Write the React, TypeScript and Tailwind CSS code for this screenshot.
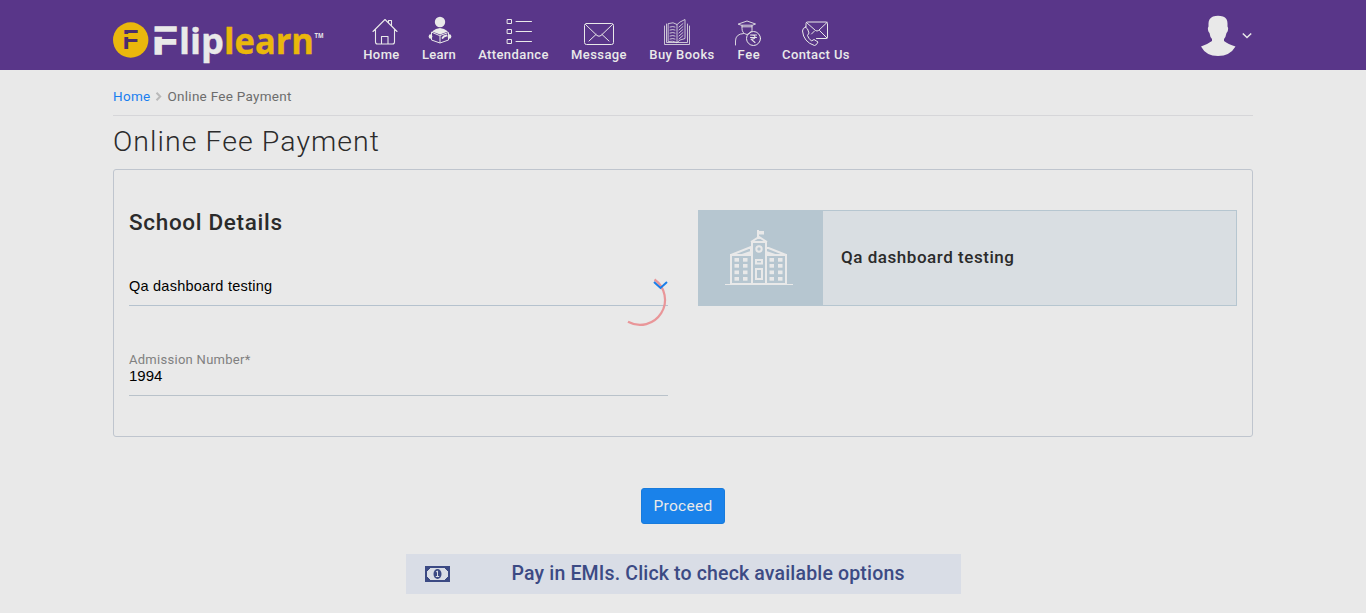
import React from "react";

type IconProps = { children: React.ReactNode; w: number; h: number; className?: string };
const Icon = ({ children, w, h, className = "" }: IconProps) => (
  <svg width={w} height={h} viewBox={`0 0 ${w} ${h}`} fill="none" stroke="#e9e9e9" strokeWidth="1" strokeLinejoin="round" strokeLinecap="round" className={`block shrink-0 ${className}`}>
    {children}
  </svg>
);

const HomeIcon = () => (
  <Icon w={26} h={30} className="ml-[6px]">
    <path d="M1 15.500 13 3.500l12 12M3.500 13.500v12.500q0 2 2 2h15q2 0 2-2V13.500M9.500 28v-7.500h6.500V28M16.500 6.500V4.500h3v5" strokeWidth="1.100" />
  </Icon>
);
const LearnIcon = () => (
  <Icon w={24} h={30} className="ml-[2px]">
    <circle cx="12" cy="6" r="5.200" fill="#e9e9e9" stroke="none" />
    <path d="M4 15.500q4-3.500 8-3.500t8 3.500l-8 3z" fill="#e9e9e9" stroke="none" />
    <path d="M3.500 16.500v7.500l8.500 3 8.500-3v-7.500L12 19.500zM12 19.500v7" strokeWidth="1" />
    <path d="M14.500 22q1-2 4-2.500" strokeWidth="1.800" />
    <ellipse cx="2.500" cy="20.500" rx="1.800" ry="2.200" fill="#e9e9e9" stroke="none" />
    <ellipse cx="21.500" cy="20.500" rx="1.800" ry="2.200" fill="#e9e9e9" stroke="none" />
  </Icon>
);
const ListIcon = () => (
  <Icon w={26} h={30} className="ml-[11px]">
    <path d="M1.500 3.500h4v4h-4zM1.500 13.500h4v4h-4zM1.500 23.500h4v4h-4zM10 5.500h15.500M10 15.500h15.500M10 25.500h15.500" />
  </Icon>
);
const MailIcon = () => (
  <Icon w={30} h={30}>
    <rect x=".5" y="7.500" width="29" height="21" rx="2" />
    <path d="m1.500 8.500 11.500 11q2 1.500 4 0l11.500-11M5 25l7-6.500M25 25l-7-6.500" />
  </Icon>
);
const BooksIcon = () => (
  <Icon w={26} h={30} className="-ml-[10px]">
    <path d="M.5 10v18.500h25V10M2.500 8v18.500h21V8M4.500 7.500q5-2 8.500 1v18q-4-2-8.500-1zM13 8.500Q15 6 21 3.500v19q-6 1-8 4" strokeWidth=".8" />
    <path d="M6 11q3-1 5 0M6 14q3-1 5 0M6 17q3-1 5 0M6 20q3-1 5 0M6 23q3-1 5 0M15 11l4-3.500M15 14l4-3.500M15 17l4-3.500M15 20l4-3.500M15 23l4-3.500" strokeWidth=".8" />
  </Icon>
);
const FeeIcon = () => (
  <Icon w={26} h={30} className="-ml-[2px]">
    <path d="M3.500 8 12 5l8.500 3-3 1.200h-11zM7 9.500v3q0 5 5 6 3-.5 5-4v-5M7 10.800h10M.5 29v-4q0-7 8-7.500" strokeWidth=".9" />
    <circle cx="18.500" cy="22.500" r="7" />
    <path d="M15.500 19h6M15.500 21.500h6M15.500 19q4.500 0 4.500 2t-4 2.200l4 3.300" strokeWidth="1.100" />
  </Icon>
);
const ContactIcon = () => (
  <Icon w={26} h={30} className="-ml-[2px]">
    <path d="M4 11V7.500q0-1.500 1.500-1.500h18.500q1.500 0 1.500 1.500v13.500q0 1.500-1.500 1.500H14.500M4.500 6.500l9 8q1.500 1 3 0l8.500-8M25 22l-7.500-7.500M9.500 18l3-3" />
    <path d="M3.500 11q-3 1-3 4 1 11 12 14.500 2 0 3.500-3.500l-4-2.500-2.500 1.500q-3-2.500-4-5.500l1.500-2.500Q6 12 3.500 11z" />
  </Icon>
);

const items = [
  { label: "Home", icon: <HomeIcon />, cls: "w-[37px] tracking-[0.4px]" },
  { label: "Learn", icon: <LearnIcon />, cls: "w-[34px] tracking-[0.2px]" },
  { label: "Attendance", icon: <ListIcon />, cls: "w-[71px] tracking-[0.4px]" },
  { label: "Message", icon: <MailIcon />, cls: "w-[56px] tracking-[0.4px]" },
  { label: "Buy Books", icon: <BooksIcon />, cls: "w-[66px] tracking-[0.45px]" },
  { label: "Fee", icon: <FeeIcon />, cls: "w-[24px] tracking-[0.7px]" },
  { label: "Contact Us", icon: <ContactIcon />, cls: "w-[66px] tracking-[0.38px]" },
];

const Logo = () => (
  <svg width="212" height="50" viewBox="0 0 212 50" className="mt-[16px] block shrink-0 overflow-visible" aria-label="Fliplearn">
    <circle cx="17.700" cy="24" r="17.700" fill="#eab70c" />
    <text x="9.500" y="33" fontFamily="Liberation Sans" fontWeight="700" fontSize="27" textLength="16" lengthAdjust="spacingAndGlyphs" fill="#4b2c6d">F</text>
    <rect x="10" y="18" width="17" height="3" fill="#eab70c" />
    <text x="39.500" y="37.500" fontFamily="Liberation Sans" fontWeight="700" fontSize="39" textLength="25" lengthAdjust="spacingAndGlyphs" fill="#e9e9e9" stroke="#e9e9e9" strokeWidth="1.300">F</text>
    <rect x="39" y="15.800" width="27" height="5" fill="#593689" />
    <text x="66" y="37.500" fontFamily="Open Sans" fontWeight="700" fontSize="35.500" textLength="45" lengthAdjust="spacingAndGlyphs" fill="#e9e9e9" stroke="#e9e9e9" strokeWidth=".4">lip</text>
    <text x="111" y="37.500" fontFamily="Open Sans" fontWeight="700" fontSize="35.500" textLength="90" lengthAdjust="spacingAndGlyphs" fill="#eab70c" stroke="#eab70c" strokeWidth=".4">learn</text>
    <text x="201.500" y="22" fontFamily="Open Sans" fontWeight="700" fontSize="7" textLength="9" lengthAdjust="spacingAndGlyphs" fill="#e9e9e9">TM</text>
  </svg>
);

const School = () => (
  <svg width="68" height="56" viewBox="0 0 68 56" fill="none" stroke="#e9e9e9" strokeWidth="2">
    <path d="M0 54.500h68" strokeWidth="1" />
    <path d="M26 25H6v29h55V25H41M27 54V12h14v42M6 25l20-8v5l-9 3M61 25l-20-8v5l9 3M26 12l8-5 8 5M33 8V0" />
    <path d="M33 1h6v3.500h-6z" fill="#e9e9e9" stroke="none" />
    <circle cx="34" cy="19" r="2.700" />
    <path d="M31 30h6v3.500h-6zM31 39h6v10h-6z" />
    <g fill="#e9e9e9" stroke="none">
      {[28, 34, 40.500, 47].map((y) => [9.500, 18, 44.500, 53].map((x) => <rect key={`${x}-${y}`} x={x} y={y} width="4.500" height="3.700" />))}
    </g>
  </svg>
);

export default function App() {
  return (
    <div className="h-[613px] overflow-hidden bg-[#e9e9e9] font-['Roboto',sans-serif] text-[#2b2b2b]">
      <header className="h-[70px] bg-[#593689]">
        <div className="mx-auto flex w-[1140px] items-start">
          <Logo />
          <nav className="ml-[38px] mt-[16px] flex gap-[22px]">
            {items.map((it) => (
              <a key={it.label} className={`flex flex-col items-center ${it.cls}`}>
                {it.icon}
                <span className="whitespace-nowrap text-[13px] font-medium leading-[17px] text-[#e9e9e9]">{it.label}</span>
              </a>
            ))}
          </nav>
          <div className="ml-auto mr-[1px] mt-[15px] flex items-center gap-[6px]">
            <svg width="36" height="41" viewBox="0 0 36 41" fill="#e9e9e9">
              <path d="M13 1.500Q18 .2 23 1.500q4.500 1.500 4.500 7v3q1 1 .5 3.500-.3 2-1.500 3-.7 4-2.500 6v2q4 3 11.500 5.500Q30 41 18 41T1 31.500Q8 29 12 26v-2q-2-2-2.500-6-1.200-1-1.500-3-.5-2.500.5-3.500v-3q0-5 4.500-7z" />
            </svg>
            <svg width="10" height="8" viewBox="0 0 10 8" fill="none" stroke="#e9e9e9" strokeWidth="1.500"><path d="m.8 1.500 4.200 4 4.200-4" /></svg>
          </div>
        </div>
      </header>
      <main className="mx-auto w-[1140px]">
        <div className="flex h-[46px] items-center border-b border-[#d6d6d9] pt-[7px] text-[13.500px] tracking-[0.28px]">
          <a className="text-[#1a7ff0]">Home</a>
          <svg width="7" height="9" viewBox="0 0 7 9" fill="none" stroke="#b9b9b9" strokeWidth="2" className="mx-[5px]"><path d="m1.500.8 3.700 3.700-3.700 3.700" /></svg>
          <span className="text-[#6d6d6d]">Online Fee Payment</span>
        </div>
        <h1 className="h-[53px] pt-[8px] text-[28.500px] font-light leading-[36px] tracking-[1.050px]">Online Fee Payment</h1>
        <section className="flex h-[268px] gap-[30px] rounded-[3px] border border-[#bfc5ce] px-[15px] pt-[40px]">
          <div className="w-[539px]">
            <h2 className="text-[22.500px] font-medium leading-[24px] tracking-[0.680px]">School Details</h2>
            <div className="mt-[40px] box-content flex h-[31px] items-start justify-between border-b border-[#b5c2ce] font-['Liberation_Sans',sans-serif] text-[14.500px] leading-[24px] tracking-[0.230px] text-black">
              <span>Qa dashboard testing</span>
              <div className="relative">
                <svg width="15" height="12" viewBox="0 0 15 12" fill="none" stroke="#1a7fea" strokeWidth="2" className="relative z-10 mt-[6px] block"><path d="m1 2 6.500 6L14 2" /></svg>
                <svg width="54" height="54" viewBox="0 0 54 54" fill="none" stroke="#e99699" strokeWidth="2.200" className="absolute -left-[39px] top-0"><path d="M40.500 5.500A25 25 0 0 1 14 47.800" /></svg>
              </div>
            </div>
            <div className="mt-[45px] h-[45px] border-b border-[#b9c2ca]">
              <div className="text-[13px] leading-[17px] tracking-[0.280px] text-[#808080]">Admission Number*</div>
              <div className="font-['Liberation_Sans',sans-serif] text-[15px] leading-[16px] text-black">1994</div>
            </div>
          </div>
          <div className="flex h-[96px] w-[539px] border border-[#b6c6d0] bg-[#d9dee2]">
            <div className="flex w-[124px] items-center justify-center bg-[#b6c6d0] pb-px pr-[5px]"><School /></div>
            <div className="flex items-center pl-[18px] text-[17px] font-medium tracking-[0.540px]">Qa dashboard testing</div>
          </div>
        </section>
        <button className="mx-auto mt-[51px] block h-[36px] w-[84px] rounded-[3px] border border-[#187bdc] bg-[#1a82ea] pt-px text-[15.500px] tracking-[0.3px] text-[#e9e9e9]">Proceed</button>
        <a className="mx-auto mt-[30px] flex h-[40px] w-[555px] items-center bg-[#d9dde6] pl-[19px] text-[19.500px] font-medium tracking-[0.160px] text-[#3c4a84]">
          <svg width="25" height="16" viewBox="0 0 25 16" fill="none" stroke="#3c4a84" strokeWidth="2">
            <path d="M1 1h23v14H1z" /><path d="M1 1h5L1 6zM24 1h-5l5 5zM1 15h5l-5-5zM24 15h-5l5-5z" fill="#3c4a84" strokeWidth="1" />
            <ellipse cx="12.500" cy="8" rx="4" ry="5" fill="#3c4a84" stroke="none" /><path d="m11 6 1.500-1v5M10.800 10.500h3.400" stroke="#d9dde6" strokeWidth="1" />
          </svg>
          <span className="ml-[62px]">Pay in EMIs. Click to check available options</span>
        </a>
      </main>
    </div>
  );
}
